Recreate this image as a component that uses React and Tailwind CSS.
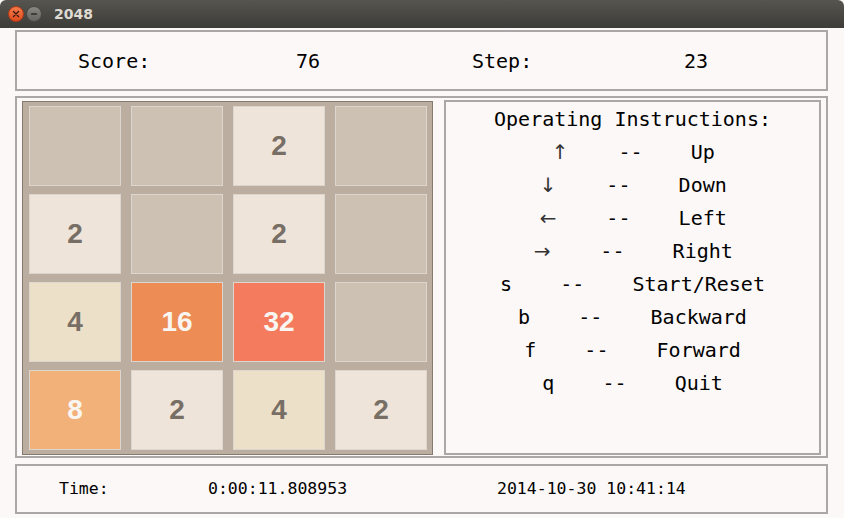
import React from "react";

const mono = { fontFamily: '"DejaVu Sans Mono", "Liberation Mono", monospace' };

const tiles = [
  [0, 0, 2, 0],
  [2, 0, 2, 0],
  [4, 16, 32, 0],
  [8, 2, 4, 2],
];

function tileClass(v) {
  switch (v) {
    case 2:
      return "bg-[#eee4da] text-[#776e65]";
    case 4:
      return "bg-[#ede0c8] text-[#776e65]";
    case 8:
      return "bg-[#f2b179] text-[#f9f6f2]";
    case 16:
      return "bg-[#ed8d55] text-[#f9f6f2]";
    case 32:
      return "bg-[#f57b5f] text-[#f9f6f2]";
    default:
      return "bg-[#cdc1b4]";
  }
}

const rows = [
  ["↑", "Up", true],
  ["↓", "Down", true],
  ["←", "Left", true],
  ["→", "Right", true],
  ["s", "Start/Reset", false],
  ["b", "Backward", false],
  ["f", "Forward", false],
  ["q", "Quit", false],
];

export default function App() {
  return (
    <div className="w-[844px] h-[518px] bg-[#fcf8f7] overflow-hidden flex flex-col">
      {/* Title bar */}
      <div className="h-[28px] shrink-0 rounded-t-[6px] bg-gradient-to-b from-[#57554f] to-[#3d3c38] flex items-center pl-[8px]">
        <div className="w-[16px] h-[16px] rounded-full bg-gradient-to-b from-[#f47a4a] to-[#df4a1c] flex items-center justify-center border border-[#b23a15]">
          <svg width="8" height="8" viewBox="0 0 8 8">
            <path d="M1.5 1.5 L6.5 6.5 M6.5 1.5 L1.5 6.5" stroke="#3a1a10" strokeWidth="1.4" strokeLinecap="round" />
          </svg>
        </div>
        <div className="ml-[2px] w-[16px] h-[16px] rounded-full bg-gradient-to-b from-[#8a8883] to-[#66645f] flex items-center justify-center border border-[#4a4844]">
          <svg width="8" height="8" viewBox="0 0 8 8">
            <path d="M1.5 4 L6.5 4" stroke="#2e2d2a" strokeWidth="1.4" strokeLinecap="round" />
          </svg>
        </div>
        <span
          className="ml-[12px] text-[14px] font-bold text-[#dfdbd2]"
          style={{ fontFamily: '"DejaVu Sans", "Liberation Sans", sans-serif' }}
        >
          2048
        </span>
      </div>

      {/* Top panel */}
      <div
        className="mt-[2px] ml-[15px] w-[813px] h-[61px] shrink-0 border-2 border-[#aaa7a6] flex items-center pl-[61px] text-[20px] text-black whitespace-pre"
        style={mono}
      >
        <span className="w-[218px]">Score:</span>
        <span className="w-[176px]">76</span>
        <span className="w-[212px]">Step:</span>
        <span>23</span>
      </div>

      {/* Middle */}
      <div className="mt-[5px] ml-[15px] w-[813px] h-[362px] shrink-0 border-2 border-[#aaa7a6] flex pl-[5px] pt-[2px]">
        {/* Board */}
        <div className="mt-[1px] w-[411px] h-[354px] border border-[#857a6e] bg-[#bbada0] pt-[4px] pl-[6px] pr-[5px] pb-[4px] grid grid-cols-[repeat(4,92px)] grid-rows-[repeat(4,80px)] gap-x-[10px] gap-y-[8px]">
          {tiles.flat().map((v, i) => (
            <div
              key={i}
              className={
                "border border-[#ddd6cf] flex items-center justify-center text-[28px] font-bold " +
                tileClass(v)
              }
              style={{ fontFamily: '"Liberation Sans", Arial, sans-serif' }}
            >
              {v ? v : ""}
            </div>
          ))}
        </div>
        {/* Instructions */}
        <div
          className="ml-[11px] w-[377px] h-[355px] border-2 border-[#aaa7a6] pt-[1px] text-[20px] leading-[33px] text-black whitespace-pre flex flex-col items-center"
          style={mono}
        >
          <div>Operating Instructions:</div>
          {rows.map(([k, a, arrow], i) => (
            <div key={i} className="flex">
              {arrow ? (
                <span
                  className="inline-block w-[20px] text-center text-[#333]"
                  style={{ fontFamily: '"DejaVu Sans", sans-serif' }}
                >
                  {k}
                </span>
              ) : (
                <span>{k}</span>
              )}
              <span>{"    --    " + a}</span>
            </div>
          ))}
        </div>
      </div>

      {/* Bottom panel */}
      <div
        className="mt-[6px] ml-[15px] w-[813px] h-[50px] shrink-0 border-2 border-[#aaa7a6] flex items-center pl-[42px] text-[16.5px] text-black whitespace-pre"
        style={mono}
      >
        <span className="w-[149px]">Time:</span>
        <span className="w-[289px]">0:00:11.808953</span>
        <span>2014-10-30 10:41:14</span>
      </div>
    </div>
  );
}
